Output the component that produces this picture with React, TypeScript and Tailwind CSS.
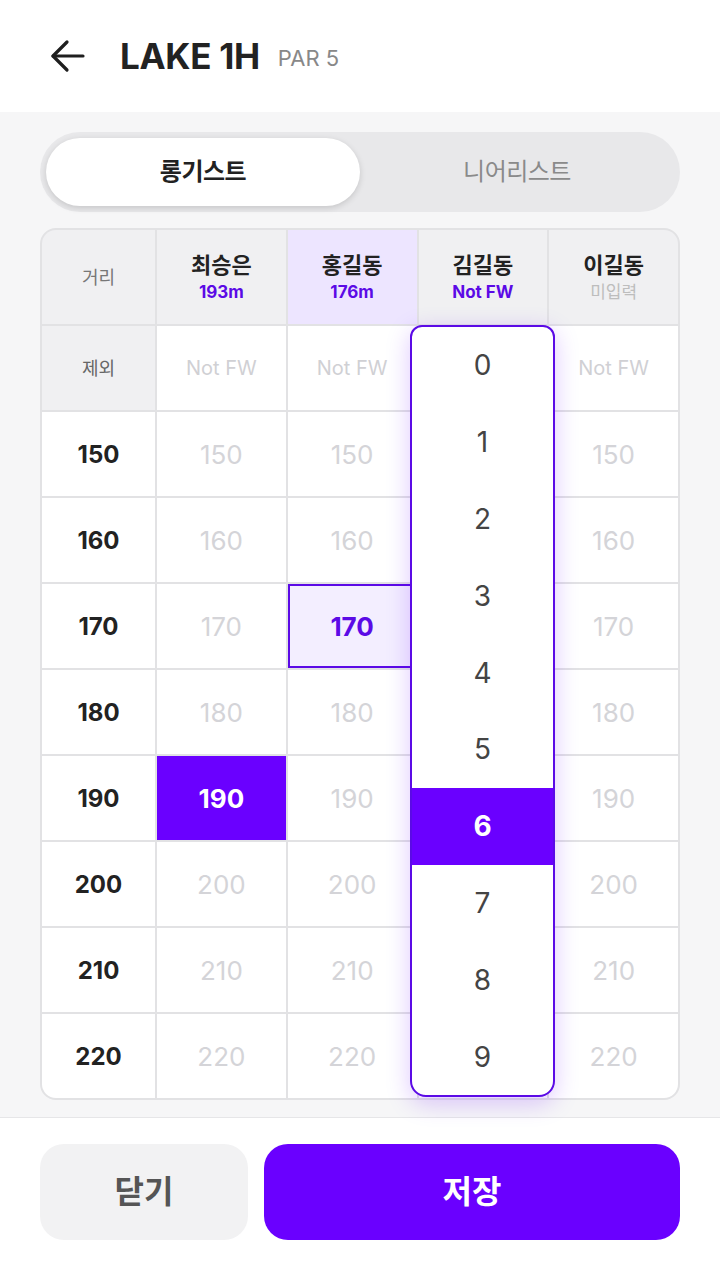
import { useState } from "react"

const PURPLE = "#6a00ff"

const players = [
  { name: "최승은", sub: "193m", subColor: "text-[#5b0ae6]" },
  { name: "홍길동", sub: "176m", subColor: "text-[#5b0ae6]" },
  { name: "김길동", sub: "Not FW", subColor: "text-[#5b0ae6]" },
  { name: "이길동", sub: "미입력", subColor: "text-[#bdbdbd] font-normal" },
]

const distances = [150, 160, 170, 180, 190, 200, 210, 220]

const font = { fontFamily: "Inter, 'Noto Sans CJK KR', sans-serif" }

// column covered by the open picker
const OPEN_COL = 2

function BackArrow() {
  return (
    <svg width="36" height="36" viewBox="0 0 36 36" fill="none" stroke="#1f1f1f" strokeWidth="3.2" strokeLinecap="round" strokeLinejoin="round">
      <path d="M33 18H3" />
      <path d="M17 4L3 18l14 14" />
    </svg>
  )
}

export default function App() {
  const [tab, setTab] = useState(0)
  const [picked, setPicked] = useState(6)

  return (
    <div className="w-[720px] h-[1280px] flex flex-col bg-[#f6f6f7]" style={font}>
      {/* Header */}
      <header className="h-[112px] bg-white flex items-center pl-[50px] shrink-0">
        <BackArrow />
        <h1 className="ml-[34px] text-[35px] font-bold text-[#222] tracking-[-0.3px]">LAKE 1H</h1>
        <span className="ml-[18px] mt-[4px] text-[22px] text-[#888]">PAR 5</span>
      </header>

      {/* Body */}
      <main className="flex-1 px-[40px] pt-[20px]">
        {/* Tabs */}
        <div className="h-[80px] rounded-full bg-[#e8e8ea] p-[6px] flex">
          {["롱기스트", "니어리스트"].map((t, i) => (
            <button
              key={t}
              onClick={() => setTab(i)}
              className={`w-[314px] h-full rounded-full text-[24px] tracking-[-0.5px] ${
                tab === i ? "bg-white font-bold text-[#222] shadow-[0_2px_6px_rgba(0,0,0,0.15)]" : "text-[#8a8a8a]"
              }`}
            >
              {t}
            </button>
          ))}
        </div>

        {/* Table */}
        <div className="relative mt-[16px]">
          <div className="grid grid-cols-[113px_repeat(4,1fr)] grid-rows-[94px_repeat(9,84px)] gap-[2px] bg-[#e2e2e4] border-2 border-[#e2e2e4] rounded-2xl overflow-hidden">
            <div className="bg-[#f0f0f2] flex items-center justify-center text-[18px] text-[#777]">거리</div>
            {players.map((p, i) => (
              <div
                key={p.name}
                className={`flex flex-col items-center justify-center ${i === 1 ? "bg-[#ede5ff]" : "bg-[#f0f0f2]"}`}
              >
                <span className="text-[22px] font-bold text-[#222] leading-[30px]">{p.name}</span>
                <span className={`text-[17px] font-bold leading-[24px] ${p.subColor}`}>{p.sub}</span>
              </div>
            ))}

            <div className="bg-[#f0f0f2] flex items-center justify-center text-[18px] text-[#666]">제외</div>
            {players.map((p, i) => (
              <div key={p.name} className="bg-white flex items-center justify-center text-[20px] text-[#d0d0d4]">
                {i === OPEN_COL ? null : "Not FW"}
              </div>
            ))}

            {distances.map((d) => (
              <>
                <div key={`l${d}`} className="bg-white flex items-center justify-center pt-[2px] text-[24px] font-bold text-[#222]">
                  {d}
                </div>
                {players.map((p, i) => {
                  if (i === 0 && d === 190)
                    return (
                      <div key={p.name + d} className="bg-[#6a00ff] flex items-center justify-center text-[26px] font-bold text-white">
                        {d}
                      </div>
                    )
                  if (i === 1 && d === 170)
                    return (
                      <div key={p.name + d} className="bg-[#f3eeff] border-2 border-[#5b0ae6] flex items-center justify-center text-[26px] font-bold text-[#5b0ae6]">
                        {d}
                      </div>
                    )
                  return (
                    <div key={p.name + d} className="bg-white flex items-center justify-center text-[26px] text-[#d4d4d8]">
                      {i === OPEN_COL ? null : d}
                    </div>
                  )
                })}
              </>
            ))}
          </div>

          {/* Dropdown picker */}
          <div className="absolute left-[370px] top-[97px] w-[145px] h-[772px] bg-white border-2 border-[#5b0ae6] rounded-t-[12px] rounded-b-[16px] overflow-hidden flex flex-col shadow-[0_6px_24px_rgba(106,0,255,0.22)]">
            {[0, 1, 2, 3, 4, 5, 6, 7, 8, 9].map((n) => (
              <button
                key={n}
                onClick={() => setPicked(n)}
                className={`flex-1 flex items-center justify-center text-[28px] ${
                  picked === n ? "bg-[#6a00ff] text-white font-bold" : "text-[#444]"
                }`}
              >
                {n}
              </button>
            ))}
          </div>
        </div>
      </main>

      {/* Footer */}
      <footer className="h-[163px] shrink-0 bg-white border-t border-[#e6e6e8] px-[40px] pt-[26px] flex gap-[16px]">
        <button className="w-[208px] h-[96px] rounded-[24px] bg-[#f2f2f3] text-[32px] font-bold text-[#555]">닫기</button>
        <button className="flex-1 h-[96px] rounded-[24px] text-[32px] font-bold text-white" style={{ background: PURPLE }}>
          저장
        </button>
      </footer>
    </div>
  )
}
